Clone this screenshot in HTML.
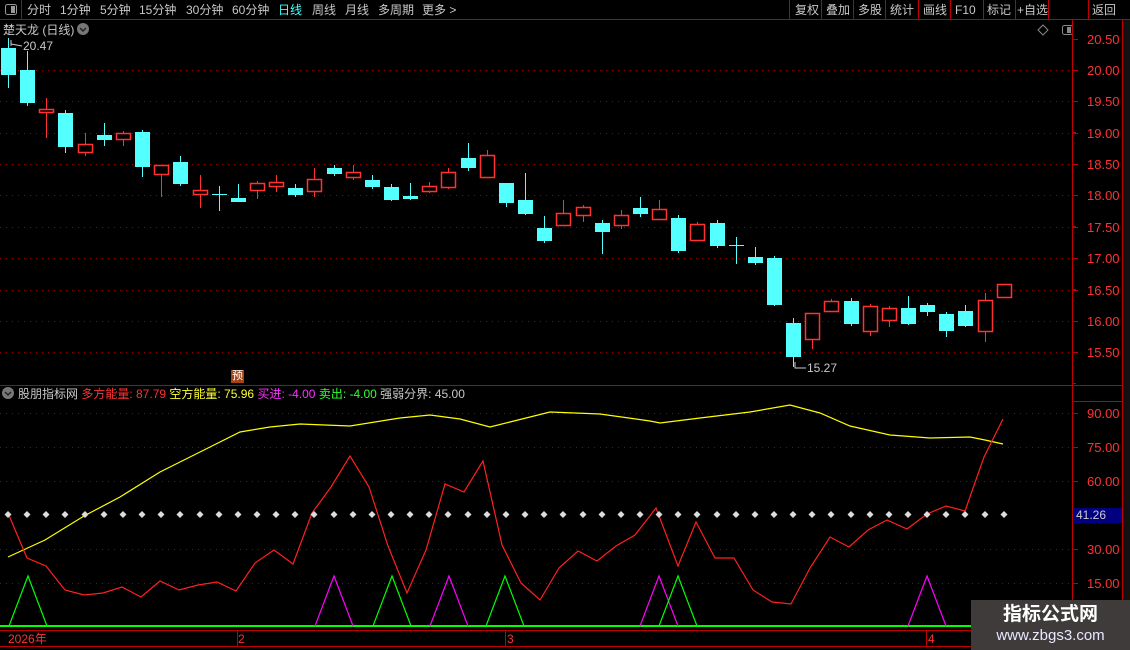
<!DOCTYPE html>
<html><head><meta charset="utf-8">
<style>
*{margin:0;padding:0;box-sizing:border-box}
body{width:1130px;height:650px;background:#000;overflow:hidden;position:relative;font-family:"Liberation Sans","Noto Sans CJK SC",sans-serif;font-size:12px;color:#c8c8c8}
.t{position:absolute;white-space:nowrap;line-height:14px}
svg{position:absolute;left:0;top:0}
</style></head><body>
<svg id="s" width="1130" height="650" xmlns="http://www.w3.org/2000/svg"></svg>

<div class="t" style="left:27px;top:3px">分时</div>
<div class="t" style="left:60px;top:3px">1分钟</div>
<div class="t" style="left:100px;top:3px">5分钟</div>
<div class="t" style="left:139px;top:3px">15分钟</div>
<div class="t" style="left:186px;top:3px">30分钟</div>
<div class="t" style="left:232px;top:3px">60分钟</div>
<div class="t" style="left:278px;top:3px;color:#4ff">日线</div>
<div class="t" style="left:312px;top:3px">周线</div>
<div class="t" style="left:345px;top:3px">月线</div>
<div class="t" style="left:378px;top:3px">多周期</div>
<div class="t" style="left:422px;top:3px">更多 &gt;</div>
<div class="t" style="left:795px;top:3px">复权</div>
<div class="t" style="left:826px;top:3px">叠加</div>
<div class="t" style="left:858px;top:3px">多股</div>
<div class="t" style="left:890px;top:3px">统计</div>
<div class="t" style="left:923px;top:3px">画线</div>
<div class="t" style="left:955px;top:3px">F10</div>
<div class="t" style="left:987px;top:3px">标记</div>
<div class="t" style="left:1017px;top:3px">+自选</div>
<div class="t" style="left:1092px;top:3px">返回</div>

<div class="t" style="left:3px;top:23px">楚天龙 (日线)</div>
<div class="t" style="left:23px;top:39px">20.47</div>
<div class="t" style="left:807px;top:361px">15.27</div>
<div class="t" style="left:231px;top:370px;background:#a8420e;color:#fff;font-size:11px;line-height:13px;width:13px;text-align:center">预</div>

<div class="t" style="left:18px;top:387px">股朋指标网 <span style="color:#ff3232">多方能量: 87.79</span> <span style="color:#ffff32">空方能量: 75.96</span> <span style="color:#ff32ff">买进: -4.00</span> <span style="color:#32ff32">卖出: -4.00</span> 强弱分界: 45.00</div>

<div id="ax"></div>
<div class="t" style="left:1074px;top:508px;width:48px;height:15px;background:#000080;color:#ccc;padding-left:2px">41.26</div>

<div class="t" style="left:8px;top:632px;color:#ff3232">2026年</div>
<div class="t" style="left:238px;top:632px;color:#ff3232">2</div>
<div class="t" style="left:507px;top:632px;color:#ff3232">3</div>
<div class="t" style="left:928px;top:632px;color:#ff3232">4</div>

<div style="position:absolute;left:971px;top:600px;width:159px;height:50px;background:#3f3b3b"></div>
<div class="t" style="left:971px;top:604px;width:159px;text-align:center;color:#fff;font-size:19px;font-weight:bold;line-height:22px">指标公式网</div>
<div class="t" style="left:971px;top:627px;width:159px;text-align:center;color:#e8e8ff;font-size:15px;line-height:18px">www.zbgs3.com</div>

<script>
var s=document.getElementById('s'),h='';
function L(x1,y1,x2,y2,c,w,d){h+='<line x1="'+x1+'" y1="'+y1+'" x2="'+x2+'" y2="'+y2+'" stroke="'+c+'" stroke-width="'+(w||1)+'"'+(d?' stroke-dasharray="'+d+'"':'')+'/>';}
var R='#c00000';
L(0,19.5,1130,19.5,R);L(21.5,0,21.5,19,R);
[789,821,853,885,918,950,983,1015,1048,1088].forEach(function(x){L(x+.5,0,x+.5,19,R)});
h+='<rect x="5.5" y="4.5" width="11" height="10" rx="2" fill="none" stroke="#999"/><rect x="11" y="6" width="4" height="7" fill="#999"/>';
h+='<rect x="1062.5" y="25.5" width="10" height="9" rx="2" fill="none" stroke="#888"/><rect x="1067" y="27" width="4" height="6" fill="#888"/>';
h+='<path d="M1043 25 L1048 30 L1043 35 L1038 30 Z" fill="none" stroke="#888"/>';
h+='<circle cx="83" cy="29" r="6" fill="#777"/><path d="M80 28 L83 31 L86 28" stroke="#222" fill="none" stroke-width="1.5"/>';
h+='<circle cx="8" cy="393" r="6" fill="#777"/><path d="M5 392 L8 395 L11 392" stroke="#222" fill="none" stroke-width="1.5"/>';
L(1072.5,20,1072.5,646,R);L(1122.5,20,1122.5,650,R);
L(0,385.5,1130,385.5,R);L(0,630.5,1072,630.5,R);L(0,646.5,1072,646.5,R);
L(1072,401.5,1122,401.5,R);
[237,505,926].forEach(function(x){L(x+.5,630,x+.5,646,R)});
var ax='';
for(var p=20.5;p>=15.49;p-=0.5){var y=Math.round(38.7+(20.5-p)*62.7)+.5;
 if(p<20.4)L(0,y,1072,y,'#a00000',1,'1 5');L(1072,y,1078,y,R);
 ax+='<div class="t" style="left:1087px;top:'+(y-7)+'px;color:#ff3232;font-size:13px">'+p.toFixed(2)+'</div>';
 L(1072,y+31,1076,y+31,R);}
[90,75,60,30,15].forEach(function(v){var y=Math.round(413+(90-v)*2.267)+.5;L(0,y,1072,y,'#a00000',1,'1 5');L(1072,y,1078,y,R);
 ax+='<div class="t" style="left:1087px;top:'+(y-7)+'px;color:#ff3232;font-size:13px">'+v.toFixed(2)+'</div>';});
document.getElementById('ax').innerHTML=ax;
var C=[[48,75,38,88,0],[70,103,51,106,0],[109,112,98,138,1],[113,147,110,153,0],[144,152,133,156,1],[135,140,123,146,0],[133,139,131,146,1],[132,167,130,177,0],[165,174,165,197,1],[162,184,156,186,0],[190,194,175,208,1],[194,195,186,211,0],[198,202,184,202,0],[183,190,181,199,1],[182,186,175,192,1],[188,195,184,197,0],[179,191,168,197,1],[168,174,165,176,0],[172,177,165,180,1],[180,187,175,189,0],[187,200,184,201,0],[196,199,183,200,0],[186,191,182,193,1],[172,187,168,189,1],[158,168,143,171,0],[155,177,150,177,1],[183,203,183,207,0],[200,214,173,215,0],[228,241,216,243,0],[213,225,200,226,1],[207,215,205,222,1],[223,232,220,254,0],[215,225,210,229,1],[208,214,197,217,0],[209,219,200,220,1],[218,251,215,253,0],[224,240,222,241,1],[223,246,220,248,0],[245,246,237,264,0],[257,263,247,265,0],[258,305,256,306,0],[323,357,318,367,0],[313,339,313,349,1],[301,311,299,312,1],[301,324,298,326,0],[306,331,304,336,1],[308,320,306,327,1],[308,324,296,325,0],[305,312,303,316,0],[314,331,312,337,0],[311,326,305,327,0],[300,331,293,342,1],[284,297,284,297,1]];
C.forEach(function(c,i){var x=Math.round(8+i*19.15),col=c[4]?'#ff3232':'#54ffff';
 L(x+.5,c[2],x+.5,c[3],col);
 if(c[4])h+='<rect x="'+(x-6.5)+'" y="'+(c[0]+.5)+'" width="14" height="'+Math.max(c[1]-c[0],2)+'" fill="#000" stroke="'+col+'" stroke-width="1.5"/>';
 else h+='<rect x="'+(x-7)+'" y="'+c[0]+'" width="15" height="'+Math.max(c[1]-c[0],1)+'" fill="'+col+'"/>';});
h+='<path d="M11 40 L11 46 M11 44 L22 46" stroke="#ccc" fill="none"/>';
h+='<path d="M795 362 L795 368 L806 368" stroke="#ccc" fill="none"/>';
function P(pts,c){h+='<polyline points="'+pts+'" fill="none" stroke="'+c+'" stroke-width="1.2"/>';}
P('8,557 45,540 84,516 120,497 160,472 200,452 240,432 270,427 300,424 350,426 400,418 430,415 460,419 490,427 510,422 550,412 600,414 650,421 660,423 700,418 750,412 790,405 820,413 850,426 890,435 930,438 970,437 985,440 1003,444','#ffff00');
P('8,513 27,558 46,566 65,590 84,595 103,593 122,587 141,597 160,581 179,590 198,585 217,582 236,591 255,563 274,550 293,564 312,513 331,487 350,456 369,487 388,546 407,593 426,550 445,484 464,492 483,461 502,545 521,583 540,600 559,568 578,551 597,561 616,546 635,535 656,508 678,566 696,522 715,558 734,558 753,590 772,602 791,604 810,568 830,537 849,547 868,530 887,520 907,529 927,514 946,506 965,511 984,457 1003,419','#ff2020');
L(0,626,1072,626,'#00ff00',2);
[[28,'#00ff00'],[334,'#ff00ff'],[392,'#00ff00'],[449,'#ff00ff'],[505,'#00ff00'],[659,'#ff00ff'],[678,'#00ff00'],[927,'#ff00ff']].forEach(function(t){
 P((t[0]-19)+',626 '+t[0]+',576 '+(t[0]+19)+',626',t[1]);});
for(var i=0;i<53;i++){var x=Math.round(8+i*19.15);h+='<path d="M'+x+' 511 L'+(x+3.5)+' 514.5 L'+x+' 518 L'+(x-3.5)+' 514.5Z" fill="#ddd"/>';}
h+='<rect x="1123" y="20" width="7" height="630" fill="#111"/>';
s.innerHTML=h;
</script>
</body></html>
